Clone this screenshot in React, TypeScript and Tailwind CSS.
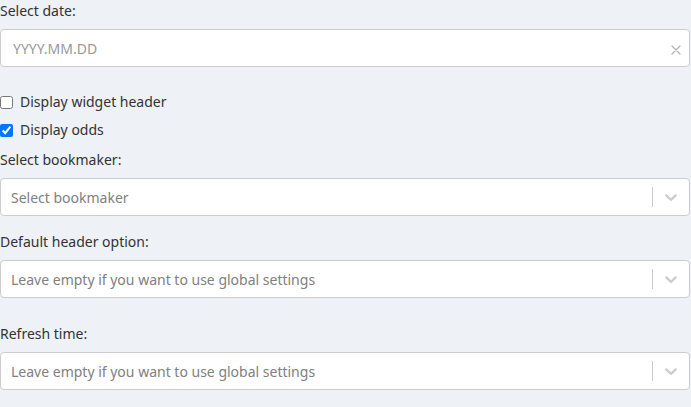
import { useState } from 'react';

const font = { fontFamily: '"Noto Sans", "Open Sans", sans-serif' };

const ChevronIcon = () => (
  <svg viewBox="0 0 20 20" className="w-5 h-5 fill-[#cccccc]" aria-hidden="true">
    <path d="M4.516 7.548c0.436-0.446 1.043-0.481 1.576 0l3.908 3.747 3.908-3.747c0.533-0.481 1.141-0.446 1.574 0 0.436 0.445 0.408 1.197 0 1.615-0.406 0.418-4.695 4.502-4.695 4.502-0.217 0.223-0.502 0.335-0.787 0.335s-0.57-0.112-0.789-0.335c0 0-4.287-4.084-4.695-4.502s-0.436-1.17 0-1.615z" />
  </svg>
);

// thin cross used by the date picker clear button
const ClearIcon = () => (
  <svg viewBox="0 0 10 10" className="w-[10px] h-[10px] stroke-[#b5b5b5]" fill="none" aria-hidden="true">
    <path d="M1 1L9 9M9 1L1 9" strokeWidth="1.4" strokeLinecap="round" />
  </svg>
);

// react-select style control
const SelectBox = ({ placeholder }: { placeholder: string }) => (
  <div className="flex items-center w-[690px] h-[38px] bg-white border border-[#cccccc] rounded-[4px]">
    <div className="flex-1 px-[10px] text-[14px] text-[#808080] truncate">{placeholder}</div>
    <div className="flex items-stretch h-full">
      <span className="w-px my-2 bg-[#cccccc]" />
      <div className="flex items-center p-2">
        <ChevronIcon />
      </div>
    </div>
  </div>
);

const Label = ({ children, className = '' }: { children: React.ReactNode; className?: string }) => (
  <div className={`text-[14px] leading-5 text-[#333333] ${className}`}>{children}</div>
);

export default function App() {
  const [showHeader, setShowHeader] = useState(false);
  const [showOdds, setShowOdds] = useState(true);

  return (
    <div className="w-[691px] h-[407px] bg-[#eef1f5] pt-px" style={font}>
      {/* Date */}
      <Label>Select date:</Label>
      <div className="mt-2 flex items-center w-[690px] h-[38px] bg-white border border-[#cccccc] rounded-[4px]">
        <input
          placeholder="YYYY.MM.DD"
          className="flex-1 bg-transparent px-3 text-[14px] text-[#333333] placeholder:text-[#999999] outline-none"
          style={font}
        />
        <div className="flex items-center pr-[8px] pl-2 pt-[3px]">
          <ClearIcon />
        </div>
      </div>

      {/* Checkboxes */}
      <label className="mt-[25px] flex items-center gap-[7px] text-[14px] leading-5 text-[#333333]">
        <input
          type="checkbox"
          checked={showHeader}
          onChange={(e) => setShowHeader(e.target.checked)}
          className="m-0 w-[13px] h-[13px]"
        />
        Display widget header
      </label>
      <label className="mt-2 flex items-center gap-[7px] text-[14px] leading-5 text-[#333333]">
        <input
          type="checkbox"
          checked={showOdds}
          onChange={(e) => setShowOdds(e.target.checked)}
          className="m-0 w-[13px] h-[13px]"
        />
        Display odds
      </label>

      {/* Bookmaker */}
      <Label className="mt-[10px]">Select bookmaker:</Label>
      <div className="mt-2">
        <SelectBox placeholder="Select bookmaker" />
      </div>

      {/* Header option */}
      <Label className="mt-4">Default header option:</Label>
      <div className="mt-2">
        <SelectBox placeholder="Leave empty if you want to use global settings" />
      </div>

      {/* Refresh */}
      <Label className="mt-[26px]">Refresh time:</Label>
      <div className="mt-2">
        <SelectBox placeholder="Leave empty if you want to use global settings" />
      </div>
    </div>
  );
}
